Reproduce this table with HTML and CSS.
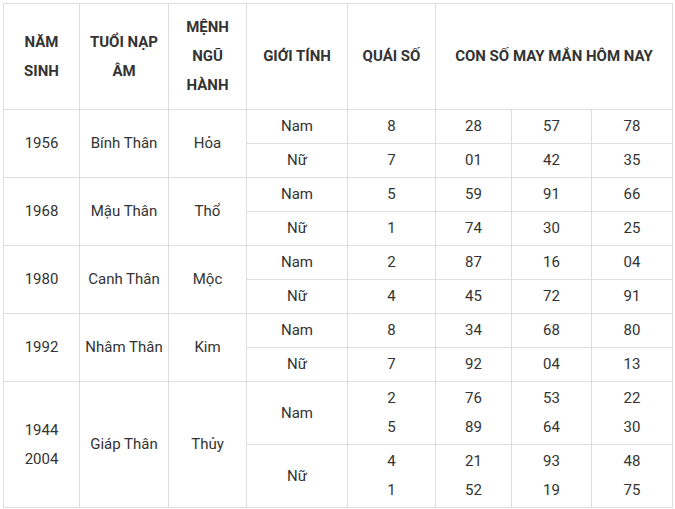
FILE: index.html
```html
<!DOCTYPE html>
<html lang="vi">
<head>
<meta charset="utf-8">
<title>Con số may mắn</title>
<link rel="stylesheet" href="styles.css">
</head>
<body>
<div class="wrap">
<table class="lucky">
<colgroup>
<col class="c1"><col class="c2"><col class="c3"><col class="c4"><col class="c5"><col class="c6"><col class="c7"><col class="c8">
</colgroup>
<thead>
<tr>
<th>NĂM<br>SINH</th>
<th>TUỔI NẠP<br>ÂM</th>
<th>MỆNH<br>NGŨ<br>HÀNH</th>
<th>GIỚI TÍNH</th>
<th>QUÁI SỐ</th>
<th colspan="3">CON SỐ MAY MẮN HÔM NAY</th>
</tr>
</thead>
<tbody>
<tr><td rowspan="2">1956</td><td rowspan="2">Bính Thân</td><td rowspan="2">Hỏa</td><td>Nam</td><td>8</td><td>28</td><td>57</td><td>78</td></tr>
<tr><td>Nữ</td><td>7</td><td>01</td><td>42</td><td>35</td></tr>
<tr><td rowspan="2">1968</td><td rowspan="2">Mậu Thân</td><td rowspan="2">Thổ</td><td>Nam</td><td>5</td><td>59</td><td>91</td><td>66</td></tr>
<tr><td>Nữ</td><td>1</td><td>74</td><td>30</td><td>25</td></tr>
<tr><td rowspan="2">1980</td><td rowspan="2">Canh Thân</td><td rowspan="2">Mộc</td><td>Nam</td><td>2</td><td>87</td><td>16</td><td>04</td></tr>
<tr><td>Nữ</td><td>4</td><td>45</td><td>72</td><td>91</td></tr>
<tr><td rowspan="2">1992</td><td rowspan="2">Nhâm Thân</td><td rowspan="2">Kim</td><td>Nam</td><td>8</td><td>34</td><td>68</td><td>80</td></tr>
<tr><td>Nữ</td><td>7</td><td>92</td><td>04</td><td>13</td></tr>
<tr><td rowspan="2">1944<br>2004</td><td rowspan="2">Giáp Thân</td><td rowspan="2">Thủy</td><td>Nam</td><td>2<br>5</td><td>76<br>89</td><td>53<br>64</td><td>22<br>30</td></tr>
<tr><td>Nữ</td><td>4<br>1</td><td>21<br>52</td><td>93<br>19</td><td>48<br>75</td></tr>
</tbody>
</table>
</div>
</body>
</html>
```
FILE: styles.css
```css
html, body {
  margin: 0;
  padding: 0;
  background: #fff;
}
.wrap {
  padding: 3px;
}
.lucky {
  border-collapse: collapse;
  table-layout: fixed;
  width: 669px;
  font-family: Roboto, "Liberation Sans", Arial, sans-serif;
  font-size: 15px;
  color: #333;
}
.c1 { width: 76px; }
.c2 { width: 89px; }
.c3 { width: 78px; }
.c4 { width: 101px; }
.c5 { width: 88px; }
.c6 { width: 76px; }
.c7 { width: 80px; }
.c8 { width: 81px; }
.lucky th, .lucky td {
  border: 1px solid #ddd;
  text-align: center;
  vertical-align: middle;
  padding: 2px 2px;
  line-height: 29px;
}
.lucky th {
  font-weight: 700;
  padding: 9px 2px;
  height: 87px;
  box-sizing: content-box;
}
.lucky td {
  height: 29px;
}
```
